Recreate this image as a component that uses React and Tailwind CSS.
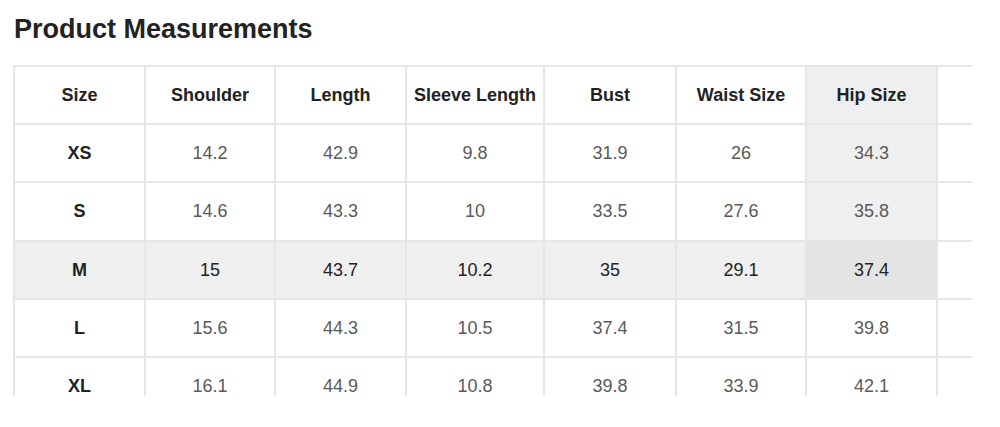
const headers = ["Size", "Shoulder", "Length", "Sleeve Length", "Bust", "Waist Size", "Hip Size", ""];

const rows = [
  ["XS", "14.2", "42.9", "9.8", "31.9", "26", "34.3"],
  ["S", "14.6", "43.3", "10", "33.5", "27.6", "35.8"],
  ["M", "15", "43.7", "10.2", "35", "29.1", "37.4"],
  ["L", "15.6", "44.3", "10.5", "37.4", "31.5", "39.8"],
  ["XL", "16.1", "44.9", "10.8", "39.8", "33.9", "42.1"],
];

// hover 된 셀: M / Hip Size
const HIP = 6;
const ACTIVE_ROW = 2;

function cellBg(r, c) {
  if (r === ACTIVE_ROW && c === HIP) return "bg-[#e4e4e4]";
  if (r === ACTIVE_ROW && c < HIP) return "bg-[#efefef]";
  if (c === HIP && r < ACTIVE_ROW) return "bg-[#efefef]";
  return "bg-white";
}

export default function App() {
  return (
    <div className="w-[1000px] h-[427px] bg-white font-['Liberation_Sans',Arial,sans-serif] overflow-hidden">
      {/* =========== 제목 =========== */}
      <h2 className="pl-[14px] pt-[13px] text-[27px] leading-[32px] font-bold text-[#222]">
        Product Measurements
      </h2>

      {/* =========== 사이즈 표 =========== */}
      <div className="mt-[20px] ml-[13px] w-[959px] h-[331px] overflow-hidden">
        <div className="grid grid-cols-[131px_130px_131px_138px_132px_130px_131px_131px] w-max border-t-2 border-l-2 border-[#e6e6e6]">
          {headers.map((h, c) => (
            <div
              key={"h" + c}
              className={
                "h-[58px] flex items-center justify-center border-r-2 border-b-2 border-[#e6e6e6] text-[18px] font-bold text-[#222] " +
                (c === HIP ? "bg-[#efefef]" : "bg-white")
              }
            >
              {h}
            </div>
          ))}
          {rows.map((row, r) =>
            [...row, ""].map((v, c) => (
              <div
                key={r + "-" + c}
                className={
                  (r === 1 ? "h-[59px] " : "h-[58px] ") +
                  "flex items-center justify-center border-r-2 border-b-2 border-[#e6e6e6] text-[18px] " +
                  cellBg(r, c) +
                  " " +
                  (c === 0
                    ? "font-bold text-[#222]"
                    : r === ACTIVE_ROW
                    ? "text-[#222]"
                    : "text-[#5a5a5a]")
                }
              >
                {v}
              </div>
            ))
          )}
        </div>
      </div>
    </div>
  );
}
